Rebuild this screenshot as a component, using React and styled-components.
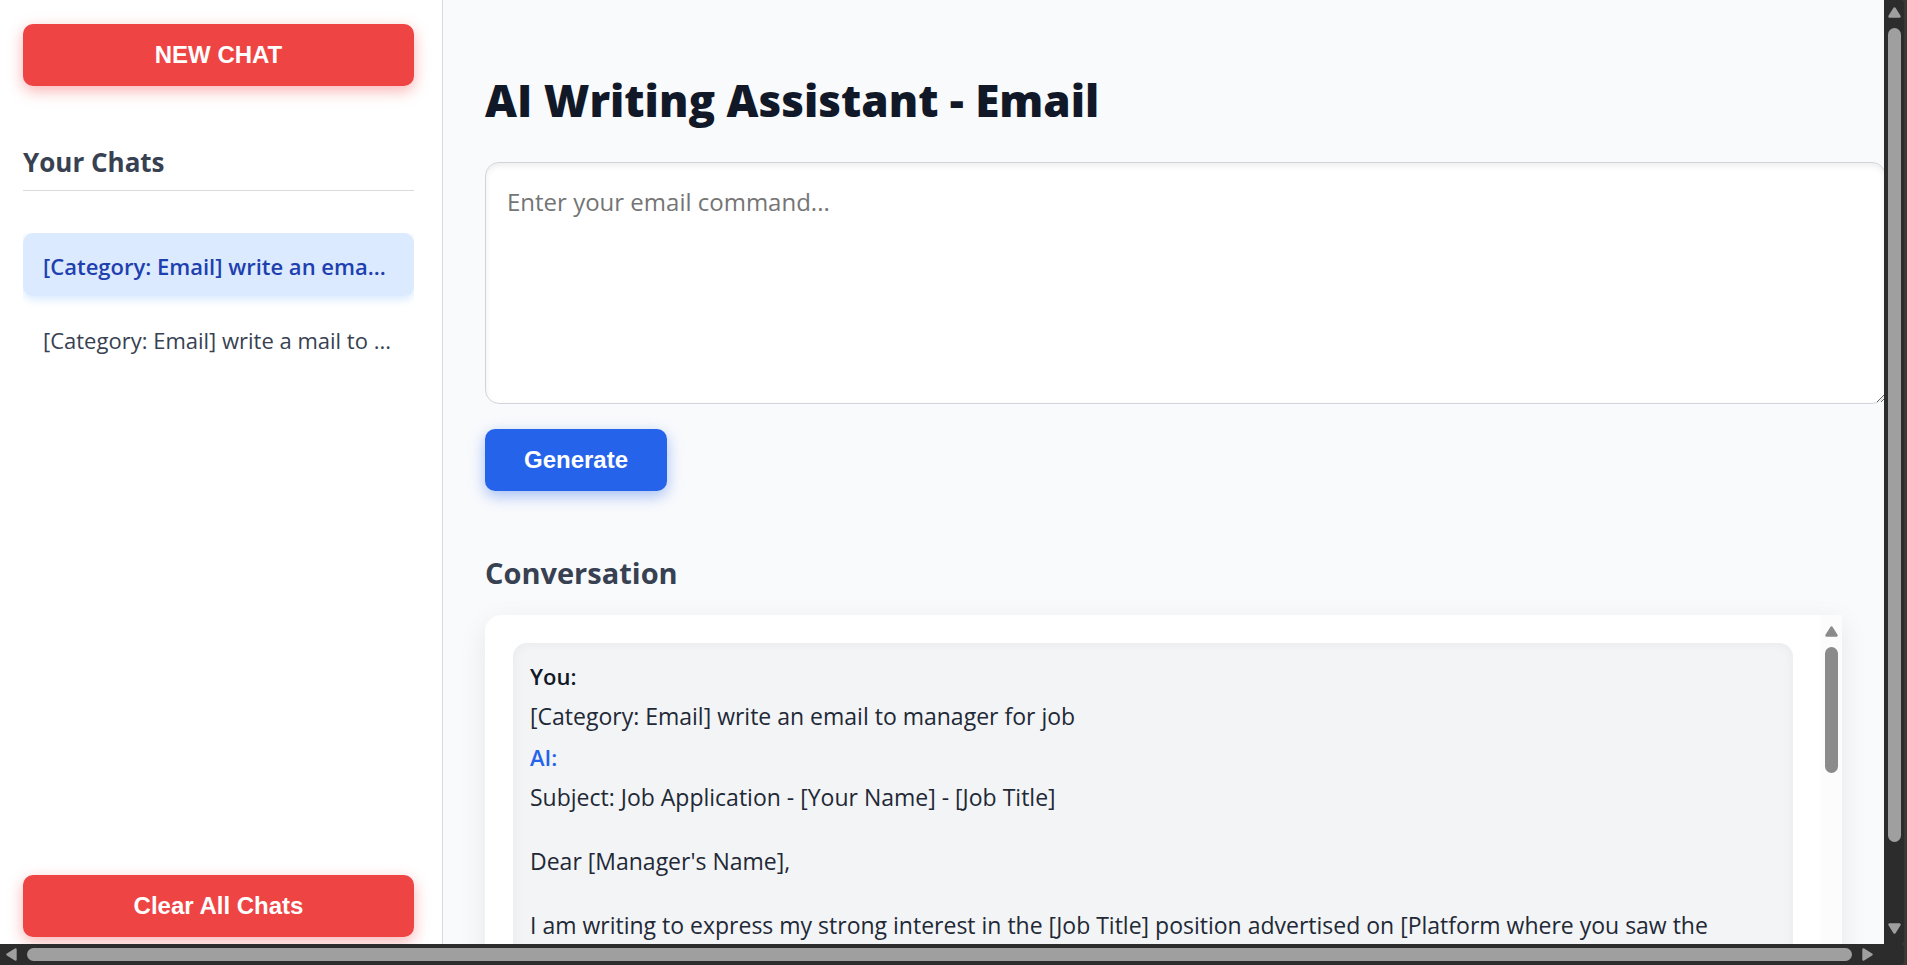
import React from "react";
import styled, { createGlobalStyle, css } from "styled-components";

const GlobalStyle = createGlobalStyle`
  * { box-sizing: border-box; }
  body {
    margin: 0;
    font-family: "Segoe UI", "Open Sans", "Noto Sans", sans-serif;
    color: #1f2937;
  }
`;

const Window = styled.div`
  display: grid;
  grid-template-columns: minmax(0, 1fr) 20px;
  grid-template-rows: minmax(0, 1fr) 21px;
  height: 100vh;
  padding-right: 3px;
  background: #3b3935;
`;

const Viewport = styled.div`
  display: flex;
  overflow: hidden;
  background: #f9fafc;
`;

const Sidebar = styled.aside`
  flex: 0 0 443px;
  display: flex;
  flex-direction: column;
  padding: 24px 28px 7px 23px;
  background: #fff;
  border-right: 1px solid #d8dadd;
`;

const Button = styled.button`
  height: 62px;
  padding: 0 39px;
  border: 0;
  border-radius: 10px;
  font: 700 24px "Liberation Sans", Arial, sans-serif;
  color: #fff;
  cursor: pointer;
  flex: none;
  ${({ $tone }) =>
    $tone === "danger"
      ? css`
          background: #ef4444;
          box-shadow: 0 5px 15px rgba(239, 68, 68, 0.4);
        `
      : css`
          background: #2563eb;
          box-shadow: 0 5px 15px rgba(37, 99, 235, 0.4);
        `}
`;

const SidebarTitle = styled.h2`
  margin: 55px 0 42px;
  padding-bottom: 7px;
  border-bottom: 1px solid #d8dadd;
  font-size: 26px;
  line-height: 42px;
  font-weight: 700;
  color: #374151;
`;

const ChatList = styled.ul`
  flex: 1;
  min-height: 0;
  margin: 0;
  padding: 0;
  list-style: none;
  overflow: hidden;
  display: flex;
  flex-direction: column;
  gap: 11px;
`;

const ChatItem = styled.button`
  display: block;
  width: 100%;
  height: 63px;
  padding: 2px 20px 0;
  border: 0;
  border-radius: 10px;
  text-align: left;
  white-space: nowrap;
  font-family: inherit;
  font-size: 22px;
  line-height: 32px;
  font-weight: ${({ $active }) => ($active ? 600 : 500)};
  color: ${({ $active }) => ($active ? "#1e40af" : "#374151")};
  background: ${({ $active }) => ($active ? "#dbeafe" : "transparent")};
  box-shadow: ${({ $active }) => ($active ? "0 3px 10px rgba(147, 197, 253, 0.4)" : "none")};
  cursor: pointer;
`;

const Main = styled.main`
  flex: 1;
  min-width: 0;
  padding: 70px 42px 0;
`;

const Title = styled.h1`
  margin: 0 0 32px;
  font-size: 44px;
  line-height: 60px;
  font-weight: 800;
  color: #111827;
`;

const Prompt = styled.textarea`
  box-sizing: content-box;
  display: block;
  width: 100%;
  height: 198px;
  padding: 21px;
  border: 1px solid #d1d5db;
  border-radius: 14px;
  background: #fff;
  box-shadow: inset 0 3px 6px rgba(0, 0, 0, 0.07);
  font-family: inherit;
  font-size: 24px;
  line-height: 36px;
  resize: vertical;
  outline: none;
  &::placeholder { color: #757575; }
`;

const Actions = styled.div`
  margin-top: 25px;
  display: flex;
`;

const SectionTitle = styled.h2`
  margin: 62px 0 22px;
  font-size: 29px;
  line-height: 40px;
  font-weight: 700;
  color: #374151;
`;

const Panel = styled.section`
  display: flex;
  height: 568px;
  background: #fff;
  border-radius: 16px 0 0 16px;
  box-shadow: 0 8px 28px rgba(0, 0, 0, 0.08);
`;

const Messages = styled.div`
  flex: 1;
  min-width: 0;
  padding: 28px;
`;

const Bubble = styled.article`
  height: 1200px;
  padding: 17px;
  border-radius: 14px;
  background: #f3f4f6;
  box-shadow: inset 0 0 12px rgba(0, 0, 0, 0.05);
  font-size: 23px;
  line-height: 32px;
`;

const Speaker = styled.p`
  margin: 0 0 8px;
  font-size: 22px;
  font-weight: 600;
  color: ${({ $ai }) => ($ai ? "#2563eb" : "#111827")};
`;

const MessageText = styled.p`
  margin: 0 0 9px;
  white-space: pre-wrap;
`;

const BarShell = styled.div`
  display: flex;
  flex-direction: ${({ $horizontal }) => ($horizontal ? "row" : "column")};
  gap: 10px;
  padding: ${({ $horizontal }) => ($horizontal ? "4px 31px 4px 6px" : "7px 3px 10px 4px")};
  background: ${({ $light }) => ($light ? "#fcfcfc" : "#2c2c2c")};
  color: ${({ $light }) => ($light ? "#8b8b8b" : "#9f9f9f")};
  border-radius: ${({ $light }) => ($light ? "0" : "0 4px 4px 0")};
  ${({ $wide }) => $wide && css`grid-column: 1 / -1;`}
  ${({ $light }) => $light && css`flex: 0 0 21px; padding: 11px 4px;`}
  svg { display: block; flex: none; }
`;

const Track = styled.div`
  flex: 1;
  display: flex;
  flex-direction: inherit;
`;

const Thumb = styled.div`
  flex: 0 0 ${({ $size }) => $size}%;
  border-radius: 7px;
  background: currentColor;
`;

const arrows = {
  up: [13, 11, "M6.5 1.5 11.5 9.5H1.5Z"],
  down: [13, 11, "M6.5 9.5 11.5 1.5H1.5Z"],
  left: [11, 13, "M1.5 6.5 9.5 1.5V11.5Z"],
  right: [11, 13, "M9.5 6.5 1.5 1.5V11.5Z"],
};

function Arrow({ direction }) {
  const [w, h, d] = arrows[direction];
  return (
    <svg width={w} height={h} viewBox={`0 0 ${w} ${h}`}>
      <path d={d} fill="currentColor" stroke="currentColor" strokeWidth="2.4" strokeLinejoin="round" />
    </svg>
  );
}

function ScrollBar({ horizontal, light, wide, size }) {
  return (
    <BarShell $horizontal={horizontal} $light={light} $wide={wide} aria-hidden="true">
      <Arrow direction={horizontal ? "left" : "up"} />
      <Track>
        <Thumb $size={size} />
      </Track>
      <Arrow direction={horizontal ? "right" : "down"} />
    </BarShell>
  );
}

const chats = [
  { id: 1, title: "[Category: Email] write an ema...", active: true },
  { id: 2, title: "[Category: Email] write a mail to ..." },
];

const reply = `Subject: Job Application - [Your Name] - [Job Title]

Dear [Manager's Name],

I am writing to express my strong interest in the [Job Title] position advertised on [Platform where you saw the`;

export default function App() {
  return (
    <>
      <GlobalStyle />
      <Window>
        <Viewport>
          <Sidebar>
            <Button type="button" $tone="danger">NEW CHAT</Button>
            <SidebarTitle>Your Chats</SidebarTitle>
            <ChatList>
              {chats.map((chat) => (
                <li key={chat.id}>
                  <ChatItem type="button" $active={chat.active}>{chat.title}</ChatItem>
                </li>
              ))}
            </ChatList>
            <Button type="button" $tone="danger">Clear All Chats</Button>
          </Sidebar>
          <Main>
            <Title>AI Writing Assistant - Email</Title>
            <Prompt aria-label="Email command" placeholder="Enter your email command..." />
            <Actions>
              <Button type="button">Generate</Button>
            </Actions>
            <SectionTitle>Conversation</SectionTitle>
            <Panel>
              <Messages>
                <Bubble>
                  <Speaker>You:</Speaker>
                  <MessageText>[Category: Email] write an email to manager for job</MessageText>
                  <Speaker $ai>AI:</Speaker>
                  <MessageText>{reply}</MessageText>
                </Bubble>
              </Messages>
              <ScrollBar light size={25} />
            </Panel>
          </Main>
        </Viewport>
        <ScrollBar size={92} />
        <ScrollBar horizontal wide size={100} />
      </Window>
    </>
  );
}
